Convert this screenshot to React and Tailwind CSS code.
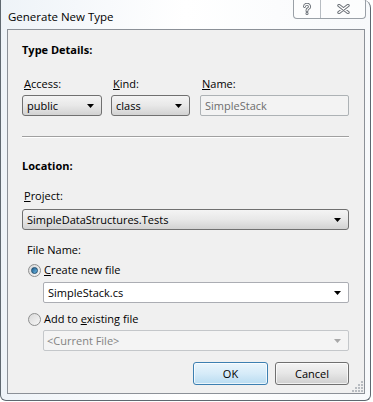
import React from 'react';

// Flecha de los combos
const Arrow = ({ color = '#000' }) => (
  <svg width="7" height="4" viewBox="0 0 7 4">
    <path d="M0 0h7L3.5 4z" fill={color} />
  </svg>
);

const Combo = ({ text, className }) => (
  <div
    className={`flex items-center justify-between h-[21px] pl-[4px] pr-[7px] border border-[#707070] rounded-[3px] bg-gradient-to-b from-[#f4f4f4] via-[#e8e8e8] to-[#d2d2d2] text-black ${className}`}
  >
    <span>{text}</span>
    <Arrow />
  </div>
);

const Radio = ({ checked }) => (
  <div className="w-[13px] h-[13px] rounded-full border border-[#8e8f8f] bg-gradient-to-br from-[#d9d9d9] to-[#f7f7f7] flex items-center justify-center">
    {checked && (
      <div className="w-[7px] h-[7px] rounded-full bg-gradient-to-br from-[#1b5c8c] to-[#6fbbe6] border border-[#1f4d6f]" />
    )}
  </div>
);

export default function App() {
  return (
    <div
      className="w-[373px] h-[402px] bg-white overflow-hidden text-[11px] leading-[16px] text-black"
      style={{ fontFamily: '"Open Sans", "Noto Sans", sans-serif' }}
    >
      <div className="w-[371px] h-[401px] border-l border-r border-b border-[#5f6870] rounded-tr-[8px] rounded-b-[6px] bg-gradient-to-r from-[#eef3f8] via-white to-[#f7f9fb] flex flex-col">
        {/* Barra de título */}
        <div className="h-[29px] flex justify-between">
          <div className="pl-[7px] pt-[9px] text-[11.5px]">Generate New Type</div>
          <div className="flex h-[19px] mr-[4px] border border-t-0 border-[#9aa0a7] rounded-b-[4px] bg-white/60">
            <div className="w-[27px] flex items-center justify-center border-r border-[#b7bcc2]">
              <svg width="10" height="12" viewBox="0 0 10 12">
                <g fill="none" strokeLinecap="round">
                  <path d="M2.5 3.5a2.5 2.3 0 1 1 3.5 2.2c-1 .5-1 1-1 2" stroke="#6c7178" strokeWidth="3" />
                  <path d="M5 10.3v.2" stroke="#6c7178" strokeWidth="3" />
                  <path d="M2.5 3.5a2.5 2.3 0 1 1 3.5 2.2c-1 .5-1 1-1 2" stroke="#fff" strokeWidth="1.2" />
                  <path d="M5 10.3v.2" stroke="#fff" strokeWidth="1.2" />
                </g>
              </svg>
            </div>
            <div className="w-[44px] flex items-center justify-center">
              <svg width="13" height="10" viewBox="0 0 13 10">
                <g strokeLinecap="round">
                  <path d="M2 1.5l9 7M11 1.5l-9 7" stroke="#6c7178" strokeWidth="3.4" />
                  <path d="M2 1.5l9 7M11 1.5l-9 7" stroke="#fff" strokeWidth="1.4" />
                </g>
              </svg>
            </div>
          </div>
        </div>

        {/* Área cliente */}
        <div className="relative ml-[6px] w-[358px] h-[365px] border border-[#8b9097] bg-[#f0f0f0] pl-[14px] pr-[15px] pt-[12px]">
          <div className="font-bold">Type Details:</div>

          <div className="flex mt-[18px] gap-[9px]">
            <div className="w-[80px] pl-[2px]">
              <span className="underline">A</span>ccess:
            </div>
            <div className="w-[79px] pl-[2px] ml-0">
              <span className="underline">K</span>ind:
            </div>
            <div className="pl-[3px]">
              <span className="underline">N</span>ame:
            </div>
          </div>
          <div className="flex mt-[3px]">
            <Combo text="public" className="w-[80px]" />
            <Combo text="class" className="w-[79px] ml-[9px]" />
            <div className="w-[149px] ml-[10px] h-[21px] border border-[#adb2b5] rounded-[2px] bg-[#f3f3f3] text-[#6d6d6d] pl-[4px] flex items-center">
              SimpleStack
            </div>
          </div>

          <div className="mt-[20px] h-px bg-[#a0a0a0] border-b border-white box-content" />

          <div className="font-bold mt-[20px]">Location:</div>

          <div className="mt-[14px] pl-[2px]">
            <span className="underline">P</span>roject:
          </div>
          <Combo text="SimpleDataStructures.Tests" className="mt-[5px] w-full" />

          <div className="mt-[12px] pl-[5px]">File Name:</div>
          <div className="mt-[4px] pl-[6px] flex items-center gap-[3px]">
            <Radio checked />
            <span>
              <span className="underline">C</span>reate new file
            </span>
          </div>
          <div className="mt-[4px] ml-[21px] h-[21px] border border-[#abadb3] rounded-[2px] bg-white flex items-center justify-between pl-[4px] pr-[7px]">
            <span>SimpleStack.cs</span>
            <Arrow />
          </div>

          <div className="mt-[8px] pl-[6px] flex items-center gap-[3px]">
            <Radio />
            <span>
              Add to <span className="underline">e</span>xisting file
            </span>
          </div>
          <div className="mt-[3px] ml-[21px] h-[21px] border border-[#c4c7ca] rounded-[2px] bg-[#f4f4f4] text-[#838383] flex items-center justify-between pl-[3px] pr-[7px]">
            <span>&lt;Current File&gt;</span>
            <Arrow color="#a8a8a8" />
          </div>

          <div className="mt-[11px] flex justify-end gap-[7px]">
            <button className="w-[75px] h-[23px] border border-[#3c7fb1] rounded-[3px] bg-gradient-to-b from-[#eaf5fc] via-[#d6ebf8] to-[#b9dcf1] shadow-[inset_0_0_0_1px_rgba(255,255,255,0.7)]">
              OK
            </button>
            <button className="w-[74px] h-[23px] border border-[#707070] rounded-[3px] bg-gradient-to-b from-[#f4f4f4] via-[#e6e6e6] to-[#cfcfcf] shadow-[inset_0_0_0_1px_rgba(255,255,255,0.7)]">
              Cancel
            </button>
          </div>

          {/* Agarre de tamaño */}
          <svg className="absolute right-[1px] bottom-[1px]" width="11" height="11" viewBox="0 0 11 11">
            {[
              [8, 0],
              [5, 3], [8, 3],
              [2, 6], [5, 6], [8, 6],
              [-1, 9], [2, 9], [5, 9], [8, 9],
            ].map(([x, y], i) => (
              <rect key={i} x={x + 1} y={y} width="2" height="2" fill="#b8bcc1" />
            ))}
          </svg>
        </div>
      </div>
    </div>
  );
}
